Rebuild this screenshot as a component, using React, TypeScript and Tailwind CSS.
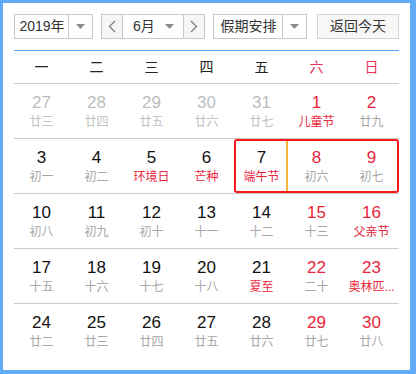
import React from "react";

type Day = { n: number; l: string; nc: string; lc: string };

const G = "text-[#bdbdbd]";
const B = "text-[#111111]";
const R = "text-[#e8253b]";
const LG = "text-[#a6a6a6]";
const LGL = "text-[#c2c2c2]";

const rows: Day[][] = [
  [
    { n: 27, l: "廿三", nc: G, lc: LGL },
    { n: 28, l: "廿四", nc: G, lc: LGL },
    { n: 29, l: "廿五", nc: G, lc: LGL },
    { n: 30, l: "廿六", nc: G, lc: LGL },
    { n: 31, l: "廿七", nc: G, lc: LGL },
    { n: 1, l: "儿童节", nc: R, lc: R },
    { n: 2, l: "廿九", nc: R, lc: LG },
  ],
  [
    { n: 3, l: "初一", nc: B, lc: LG },
    { n: 4, l: "初二", nc: B, lc: LG },
    { n: 5, l: "环境日", nc: B, lc: R },
    { n: 6, l: "芒种", nc: B, lc: R },
    { n: 7, l: "端午节", nc: B, lc: R },
    { n: 8, l: "初六", nc: R, lc: LG },
    { n: 9, l: "初七", nc: R, lc: LG },
  ],
  [
    { n: 10, l: "初八", nc: B, lc: LG },
    { n: 11, l: "初九", nc: B, lc: LG },
    { n: 12, l: "初十", nc: B, lc: LG },
    { n: 13, l: "十一", nc: B, lc: LG },
    { n: 14, l: "十二", nc: B, lc: LG },
    { n: 15, l: "十三", nc: R, lc: LG },
    { n: 16, l: "父亲节", nc: R, lc: R },
  ],
  [
    { n: 17, l: "十五", nc: B, lc: LG },
    { n: 18, l: "十六", nc: B, lc: LG },
    { n: 19, l: "十七", nc: B, lc: LG },
    { n: 20, l: "十八", nc: B, lc: LG },
    { n: 21, l: "夏至", nc: B, lc: R },
    { n: 22, l: "二十", nc: R, lc: LG },
    { n: 23, l: "奥林匹...", nc: R, lc: R },
  ],
  [
    { n: 24, l: "廿二", nc: B, lc: LG },
    { n: 25, l: "廿三", nc: B, lc: LG },
    { n: 26, l: "廿四", nc: B, lc: LG },
    { n: 27, l: "廿五", nc: B, lc: LG },
    { n: 28, l: "廿六", nc: B, lc: LG },
    { n: 29, l: "廿七", nc: R, lc: LG },
    { n: 30, l: "廿八", nc: R, lc: LG },
  ],
];

const Caret = () => (
  <svg width="9" height="5" viewBox="0 0 9 5">
    <path d="M0 0 L9 0 L4.5 5 Z" fill="#8a8a8a" />
  </svg>
);

const Chevron = ({ dir }: { dir: "l" | "r" }) => (
  <svg width="8" height="13" viewBox="0 0 8 13">
    <polyline
      points={dir === "l" ? "7,1 1.5,6.5 7,12" : "1,1 6.5,6.5 1,12"}
      fill="none"
      stroke="#7a7a7a"
      strokeWidth="1.2"
    />
  </svg>
);

export default function App() {
  const font = { fontFamily: '"Liberation Sans", "Noto Sans CJK SC", sans-serif' };
  return (
    <div
      className="w-[416px] h-[374px] bg-[#62abf6] pt-[3px] pl-[3px] pr-[6px] pb-[4px]"
      style={font}
    >
      <div className="h-full bg-white px-[11px] pt-[11px]">
        {/* toolbar */}
        <div className="flex h-[25px] text-[14px] text-[#333333]">
          <div className="w-[79px] flex border border-[#c8c8c8]">
            <div className="flex-1 flex items-center justify-center pl-[1px]">2019年</div>
            <div className="w-[24px] border-l border-[#c8c8c8] flex items-center justify-center">
              <Caret />
            </div>
          </div>
          <div className="w-[104px] ml-[8px] flex border border-[#c8c8c8]">
            <div className="w-[21px] bg-[#f6f6f6] border-r border-[#c8c8c8] flex items-center justify-center">
              <Chevron dir="l" />
            </div>
            <div className="flex-1 flex items-center">
              <span className="ml-[10px]">6月</span>
              <span className="ml-auto mr-[9px] flex">
                <Caret />
              </span>
            </div>
            <div className="w-[21px] bg-[#f6f6f6] border-l border-[#c8c8c8] flex items-center justify-center">
              <Chevron dir="r" />
            </div>
          </div>
          <div className="w-[94px] ml-[8px] flex border border-[#c8c8c8]">
            <div className="flex-1 flex items-center justify-center pl-[1px]">假期安排</div>
            <div className="w-[24px] border-l border-[#c8c8c8] flex items-center justify-center">
              <Caret />
            </div>
          </div>
          <div className="w-[82px] ml-[10px] flex items-center justify-center border border-[#d4d4d4] bg-[#f7f7f7]">
            返回今天
          </div>
        </div>

        <div className="mt-[11px] h-px bg-[#4ea3f5]" />

        {/* weekday header */}
        <div className="grid grid-cols-7 h-[33px] items-center text-[14px] border-b border-[#cacaca]">
          {["一", "二", "三", "四", "五", "六", "日"].map((w, i) => (
            <div
              key={w}
              className={`text-center ${i >= 5 ? "text-[#e8335a]" : "text-[#222222]"}`}
            >
              {w}
            </div>
          ))}
        </div>

        {rows.map((row, ri) => (
          <div
            key={ri}
            className={`relative grid grid-cols-7 h-[55px] ${ri < rows.length - 1 ? "border-b border-[#cacaca]" : ""}`}
          >
            {row.map((d, ci) => (
              <div key={ci} className="flex flex-col items-center pt-[9px]">
                <div className={`text-[17px] leading-[20px] ${d.nc}`}>{d.n}</div>
                <div className={`text-[12px] leading-[16px] mt-[1px] whitespace-nowrap ${d.lc}`}>
                  {d.l}
                </div>
              </div>
            ))}
            {ri === 1 && (
              <>
                <div className="absolute left-[272px] top-0 w-[2px] h-[54px] bg-[#f5b835]" />
                <div className="absolute left-[220px] top-0 w-[165px] h-[54px] border-2 border-[#f41a1a] rounded-[3px]" />
              </>
            )}
          </div>
        ))}
      </div>
    </div>
  );
}
